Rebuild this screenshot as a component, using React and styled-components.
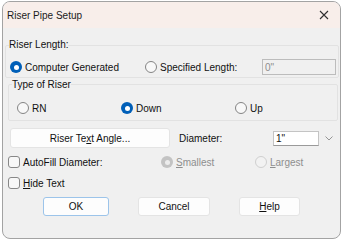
import React from 'react'
import styled, { createGlobalStyle } from 'styled-components'

const Global = createGlobalStyle`
  html, body {
    margin: 0;
    padding: 0;
    background: #ffffff;
  }
  body {
    font-family: 'Liberation Sans', Arial, sans-serif;
    font-size: 10px;
    color: #111111;
  }
`

const Window = styled.div`
  box-sizing: border-box;
  width: 339px;
  height: 238px;
  margin: 1px 0 0 2px;
  border: 1px solid #a3a3a3;
  border-radius: 8px;
  overflow: hidden;
  background: #f0f0f0;
  display: flex;
  flex-direction: column;
`

const TitleBar = styled.div`
  flex: none;
  height: 26px;
  background: #f8eeea;
  display: flex;
  align-items: center;
  justify-content: space-between;
  padding: 0 11px 0 4px;
  color: #1b1b1b;
`

const Body = styled.div`
  flex: 1;
  display: flex;
  flex-direction: column;
  padding: 11px 0 0 0;
`

const Group = styled.fieldset`
  margin: ${p => p.$mt}px ${p => p.$mr}px 0 ${p => p.$ml}px;
  padding: ${p => p.$pt}px 0 ${p => p.$pb}px 3px;
  border: 1px solid #e2e2e2;
  border-radius: 2px;
  min-width: 0;
`

const Legend = styled.legend`
  padding: 0;
  line-height: ${p => p.$lh}px;
`

const Row = styled.div`
  display: flex;
  align-items: center;
  height: ${p => p.$h || 14}px;
  margin-top: ${p => p.$mt || 0}px;
  padding-left: ${p => p.$pl || 0}px;
  padding-right: ${p => p.$pr || 0}px;
`

const Option = styled.label`
  flex: none;
  display: flex;
  align-items: center;
  gap: 3px;
  width: ${p => (p.$w ? `${p.$w}px` : 'auto')};
  color: ${p => (p.$disabled ? '#8e8e8e' : 'inherit')};
`

const Radio = styled.span`
  flex: none;
  box-sizing: border-box;
  width: 12px;
  height: 12px;
  border-radius: 50%;
  display: flex;
  align-items: center;
  justify-content: center;
  background: ${p =>
    p.$checked ? (p.$disabled ? '#c3c3c3' : '#005fb8') : p.$disabled ? '#f2f2f2' : '#f8f8f8'};
  border: ${p =>
    p.$checked ? 'none' : p.$disabled ? '1px solid #cfcfcf' : '1px solid #848484'};

  &::after {
    content: '';
    display: ${p => (p.$checked ? 'block' : 'none')};
    width: 5px;
    height: 5px;
    border-radius: 50%;
    background: ${p => (p.$disabled ? '#ececec' : '#ffffff')};
  }
`

const Check = styled.span`
  flex: none;
  box-sizing: border-box;
  width: 12px;
  height: 12px;
  border: 1px solid #878787;
  border-radius: 3px;
  background: #f7f7f7;
`

const Field = styled.div`
  box-sizing: border-box;
  width: ${p => p.$w}px;
  height: ${p => p.$h}px;
  padding-left: 2px;
  border: 1px solid ${p => (p.$disabled ? '#bcbcbc' : '#c4c4c4')};
  border-bottom-color: ${p => (p.$disabled ? '#bcbcbc' : '#9a9a9a')};
  background: ${p => (p.$disabled ? '#f0f0f0' : '#ffffff')};
  color: ${p => (p.$disabled ? '#8e8e8e' : '#111111')};
  display: flex;
  align-items: center;
`

const Combo = styled.div`
  margin-left: auto;
  margin-right: 2px;
  display: flex;
  align-items: center;
`

const Arrow = styled.div`
  width: 19px;
  height: 15px;
  display: flex;
  align-items: center;
  justify-content: center;
`

const Button = styled.div`
  box-sizing: border-box;
  flex: none;
  width: ${p => p.$w}px;
  height: ${p => p.$h || 19}px;
  background: #fdfdfd;
  border: 1px solid ${p => (p.$default ? '#9cc4ea' : '#e4e4e4')};
  border-radius: 3px;
  display: flex;
  align-items: center;
  justify-content: center;
  color: #111111;
`

const Label = styled.span`
  margin-left: ${p => p.$ml || 0}px;
`

const Buttons = styled.div`
  display: flex;
  gap: 29px;
  margin: 7px 0 0 40px;
`

const CloseIcon = () => (
  <svg width="10" height="10" viewBox="0 0 10 10">
    <path d="M1 1 L9 9 M9 1 L1 9" stroke="#303030" strokeWidth="1.1" />
  </svg>
)

const Chevron = () => (
  <svg width="8" height="5" viewBox="0 0 8 5">
    <path d="M0.5 0.5 L4 4 L7.5 0.5" stroke="#8a8a8a" strokeWidth="0.9" fill="none" />
  </svg>
)

const App = () => {
  return (
    <>
      <Global />
      <Window>
        <TitleBar>
          <span>Riser Pipe Setup</span>
          <CloseIcon />
        </TitleBar>
        <Body>
          <Group $mt={0} $ml={2} $mr={1} $pt={9} $pb={3}>
            <Legend $lh={12}>Riser Length:</Legend>
            <Row $pl={1}>
              <Option $w={135}>
                <Radio $checked />
                Computer Generated
              </Option>
              <Option $w={117}>
                <Radio />
                Specified Length:
              </Option>
              <Field $w={74} $h={16} $disabled>0"</Field>
            </Row>
          </Group>

          <Group $mt={1} $ml={5} $mr={2} $pt={11} $pb={5}>
            <Legend $lh={11}>Type of Riser</Legend>
            <Row $pl={5}>
              <Option $w={104}>
                <Radio />
                RN
              </Option>
              <Option $w={114}>
                <Radio $checked />
                Down
              </Option>
              <Option>
                <Radio />
                Up
              </Option>
            </Row>
          </Group>

          <Row $h={20} $mt={7} $pl={7}>
            <Button $w={160} $h={20}>
              <span>
                Riser Te<u>x</u>t Angle...
              </span>
            </Button>
            <Label $ml={9}>Diameter:</Label>
            <Combo>
              <Field $w={46} $h={15}>1"</Field>
              <Arrow>
                <Chevron />
              </Arrow>
            </Combo>
          </Row>

          <Row $mt={7} $pl={5}>
            <Option $w={153}>
              <Check />
              AutoFill Diameter:
            </Option>
            <Option $w={94} $disabled>
              <Radio $checked $disabled />
              <span>
                <u>S</u>mallest
              </span>
            </Option>
            <Option $disabled>
              <Radio $disabled />
              <span>
                <u>L</u>argest
              </span>
            </Option>
          </Row>

          <Row $mt={7} $pl={5}>
            <Option>
              <Check />
              <span>
                <u>H</u>ide Text
              </span>
            </Option>
          </Row>

          <Buttons>
            <Button $w={66} $default>OK</Button>
            <Button $w={72}>Cancel</Button>
            <Button $w={61}>
              <span>
                <u>H</u>elp
              </span>
            </Button>
          </Buttons>
        </Body>
      </Window>
    </>
  )
}

export default App
